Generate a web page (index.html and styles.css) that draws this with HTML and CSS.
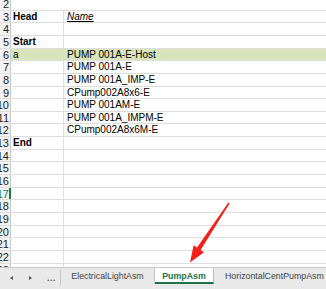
FILE: index.html
```html
<!DOCTYPE html>
<html lang="en">
<head>
    <meta charset="UTF-8">
    <meta name="viewport" content="width=device-width, initial-scale=1.0">
    <title>PumpAsm</title>
    <link rel="stylesheet" href="styles.css">
</head>
<body>

    <div class="sheet">
        <div class="row first"><div class="rh">2</div><div class="ca"></div><div class="cb"></div></div>
        <div class="row"><div class="rh">3</div><div class="ca bold">Head</div><div class="cb name">Name</div></div>
        <div class="row"><div class="rh">4</div><div class="ca"></div><div class="cb"></div></div>
        <div class="row"><div class="rh">5</div><div class="ca bold">Start</div><div class="cb"></div></div>
        <div class="row green"><div class="rh">6</div><div class="ca">a</div><div class="cb">PUMP 001A-E-Host</div></div>
        <div class="row"><div class="rh">7</div><div class="ca"></div><div class="cb">PUMP 001A-E</div></div>
        <div class="row"><div class="rh">8</div><div class="ca"></div><div class="cb">PUMP 001A_IMP-E</div></div>
        <div class="row"><div class="rh">9</div><div class="ca"></div><div class="cb">CPump002A8x6-E</div></div>
        <div class="row"><div class="rh">10</div><div class="ca"></div><div class="cb">PUMP 001AM-E</div></div>
        <div class="row"><div class="rh">11</div><div class="ca"></div><div class="cb">PUMP 001A_IMPM-E</div></div>
        <div class="row"><div class="rh">12</div><div class="ca"></div><div class="cb">CPump002A8x6M-E</div></div>
        <div class="row"><div class="rh">13</div><div class="ca bold">End</div><div class="cb"></div></div>
        <div class="row"><div class="rh">14</div><div class="ca"></div><div class="cb"></div></div>
        <div class="row"><div class="rh">15</div><div class="ca"></div><div class="cb"></div></div>
        <div class="row"><div class="rh">16</div><div class="ca"></div><div class="cb"></div></div>
        <div class="row"><div class="rh active">17</div><div class="ca"></div><div class="cb"></div></div>
        <div class="row"><div class="rh">18</div><div class="ca"></div><div class="cb"></div></div>
        <div class="row"><div class="rh">19</div><div class="ca"></div><div class="cb"></div></div>
        <div class="row"><div class="rh">20</div><div class="ca"></div><div class="cb"></div></div>
        <div class="row"><div class="rh">21</div><div class="ca"></div><div class="cb"></div></div>
        <div class="row"><div class="rh">22</div><div class="ca"></div><div class="cb"></div></div>
        <div class="row"><div class="rh">23</div><div class="ca"></div><div class="cb"></div></div>
    </div>

    <div class="tabbar">
        <div class="nav">
            <span class="tri left"></span>
            <span class="tri right"></span>
            <span class="dots">...</span>
        </div>
        <div class="tab">ElectricalLightAsm</div>
        <div class="tab current">PumpAsm</div>
        <div class="tab">HorizontalCentPumpAsm</div>
    </div>

    <!-- red pointer drawn over the sheet -->
    <svg class="arrow" width="326" height="289" viewBox="0 0 326 289">
        <polygon points="229.6,203.4 200.6,249.9 204,252.3 190,262.5 193.6,245.2 197,247.5 228.4,202.6" fill="#f5201a"/>
    </svg>

</body>
</html>
```

FILE: styles.css
```css
* {
    box-sizing: border-box;
    margin: 0;
    padding: 0;
}

body {
    width: 326px;
    height: 289px;
    overflow: hidden;
    background: #fff;
    font-family: "Liberation Sans", Arial, sans-serif;
    position: relative;
}

.sheet {
    height: 267px;
    overflow: hidden;
}

.row {
    display: flex;
    height: 12.65px;
    border-bottom: 1px solid #dedede;
    font-size: 10px;
    line-height: 12px;
    color: #000;
}

.row.first {
    height: 10.7px;
    align-items: flex-end;
}

.rh {
    width: 11px;
    flex: none;
    background: #f3f3f3;
    border-right: 1px solid #c8c8c8;
    color: #222;
    font-size: 11px;
    text-align: right;
    padding-right: 1px;
    overflow: hidden;
    white-space: nowrap;
    direction: rtl;
}

.rh.active {
    border-right: 2px solid #217346;
    color: #217346;
    padding-right: 0;
}

.ca {
    width: 53px;
    flex: none;
    border-right: 1px solid #dedede;
    padding-left: 2px;
}

.cb {
    flex: 1;
    padding-left: 3px;
    white-space: nowrap;
}

.bold {
    font-weight: bold;
}

.name {
    font-style: italic;
    text-decoration: underline;
}

.green .ca,
.green .cb {
    background: #d8e4bc;
}

.tabbar {
    height: 22px;
    background: #e9e9e9;
    border-top: 1px solid #c9c9c9;
    display: flex;
    align-items: flex-start;
    font-size: 8.8px;
    color: #444;
}

.nav {
    width: 61px;
    height: 15px;
    flex: none;
    display: flex;
    align-items: center;
    border-right: 1px solid #c4c4c4;
    margin-top: 2px;
}

.tri {
    width: 0;
    height: 0;
    border-top: 2.5px solid transparent;
    border-bottom: 2.5px solid transparent;
}

.tri.left {
    border-right: 3px solid #555;
    margin-left: 10px;
}

.tri.right {
    border-left: 3px solid #555;
    margin-left: 16px;
}

.dots {
    margin-left: 15px;
    font-weight: bold;
    color: #555;
    letter-spacing: 0.5px;
}

.tab {
    flex: none;
    height: 16px;
    line-height: 17px;
    padding: 0 11px;
    white-space: nowrap;
    border-right: 1px solid #c4c4c4;
}

.tab:nth-child(2) {
    width: 94px;
    padding: 0;
    text-align: center;
}

.tab.current {
    width: 59px;
    padding: 0;
    text-align: center;
    background: #fff;
    color: #217346;
    font-weight: bold;
    border-bottom: 2px solid #217346;
    border-right: 1px solid #bdbdbd;
    line-height: 16px;
}

.arrow {
    position: absolute;
    left: 0;
    top: 0;
}
```
